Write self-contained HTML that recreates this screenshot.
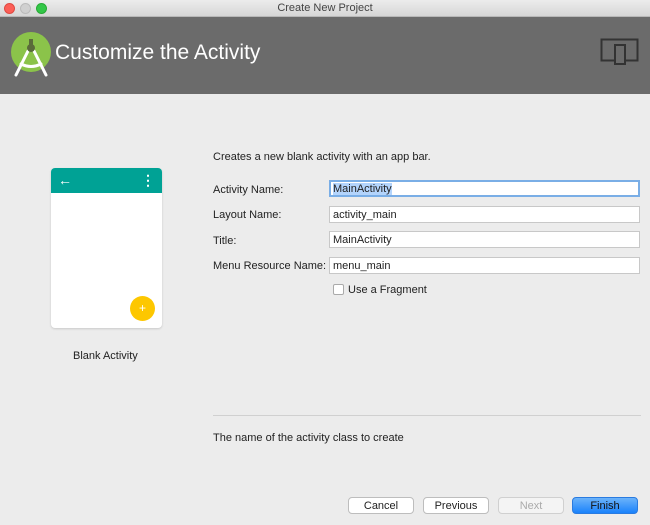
<!DOCTYPE html>
<html><head><style>
*{margin:0;padding:0;box-sizing:border-box}
body{width:650px;height:525px;overflow:hidden;background:#ececec;font-family:"Liberation Sans",sans-serif;font-size:11px;color:#222;position:relative}
.tb{position:absolute;left:0;top:0;width:650px;height:17px;background:linear-gradient(#ececec,#d6d6d6);border-bottom:1px solid #b8b8b8;text-align:center;font-size:11px;line-height:16px;color:#444}
.dot{position:absolute;top:3px;width:11px;height:11px;border-radius:50%}
.hd{position:absolute;left:0;top:17px;width:650px;height:77px;background:#6b6b6b}
.hd h1{position:absolute;left:55px;top:24px;font-size:21px;font-weight:normal;color:#fff}
.lbl{position:absolute;left:213px}
.in{position:absolute;left:329px;width:311px;height:17px;background:#fff;border:1px solid #c8c8c8;padding-left:3px;line-height:17px;font-size:11px}
.btn{position:absolute;top:497px;height:17px;border-radius:4px;background:#fff;border:1px solid #bdbdbd;text-align:center;line-height:16px;font-size:11px}
</style></head><body>
<div class="tb">Create New Project
<div class="dot" style="left:4px;background:#fc5f57;border:1px solid #de4a42"></div>
<div class="dot" style="left:20px;background:#d0d0d0;border:1px solid #bbb"></div>
<div class="dot" style="left:36px;background:#33c748;border:1px solid #27aa35"></div>
</div>
<div class="hd">
<svg style="position:absolute;left:10px;top:14px" width="42" height="48" viewBox="0 0 42 48">
<circle cx="21" cy="21" r="20" fill="#8bc34a"/>
<g stroke="#fff" stroke-width="3" fill="none" stroke-linecap="round"><path d="M18 20 L6 44"/><path d="M24 20 L36 44"/><path d="M11 33 Q21 38 31 33"/></g>
<circle cx="21" cy="17" r="4" fill="#5a6b3a"/><rect x="19" y="8" width="4" height="6" fill="#5a6b3a"/>
</svg>
<h1>Customize the Activity</h1>
<svg style="position:absolute;left:600px;top:20px" width="40" height="28"><rect x="1.5" y="2.5" width="36" height="21" fill="none" stroke="#333" stroke-width="2"/><rect x="15" y="8" width="10" height="19" fill="#6b6b6b" stroke="#333" stroke-width="2"/></svg>
</div>
<div style="position:absolute;left:51px;top:168px;width:111px;height:160px;background:#fff;border-radius:4px;box-shadow:0 1px 2px rgba(0,0,0,.15);overflow:hidden">
<div style="height:25px;background:#00a295;color:#fff;font-size:14px;line-height:24px;padding-left:7px">←<span style="position:absolute;right:7px;font-weight:bold">⋮</span></div>
<div style="position:absolute;left:79px;top:128px;width:25px;height:25px;border-radius:50%;background:#fdc700;color:#fff;text-align:center;line-height:25px;font-size:12px">+</div>
</div>
<div style="position:absolute;left:73px;top:350px">Blank Activity</div>
<div class="lbl" style="top:151px">Creates a new blank activity with an app bar.</div>
<div class="lbl" style="top:184px">Activity Name:</div>
<div class="lbl" style="top:209px">Layout Name:</div>
<div class="lbl" style="top:235px">Title:</div>
<div class="lbl" style="top:260px">Menu Resource Name:</div>
<div class="in" style="top:180px;border:2px solid #7aaee6;padding-left:2px;line-height:15px"><span style="background:#b3d4fc">MainActivity</span></div>
<div class="in" style="top:206px;line-height:16px">activity_main</div>
<div class="in" style="top:231px;line-height:16px">MainActivity</div>
<div class="in" style="top:257px;line-height:16px">menu_main</div>
<div style="position:absolute;left:333px;top:284px;width:11px;height:11px;background:#fff;border:1px solid #aaa;border-radius:2px"></div>
<div class="lbl" style="left:348px;top:284px">Use a Fragment</div>
<div style="position:absolute;left:213px;top:415px;width:428px;border-top:1px solid #d0d0d0"></div>
<div class="lbl" style="top:432px">The name of the activity class to create</div>
<div class="btn" style="left:348px;width:66px">Cancel</div>
<div class="btn" style="left:423px;width:66px">Previous</div>
<div class="btn" style="left:498px;width:66px;color:#aaa;background:#f4f4f4;border-color:#d0d0d0">Next</div>
<div class="btn" style="left:572px;width:66px;background:linear-gradient(#6cb3fa,#1a82fb);border-color:#2a7be0;color:#111">Finish</div>
</body></html>
